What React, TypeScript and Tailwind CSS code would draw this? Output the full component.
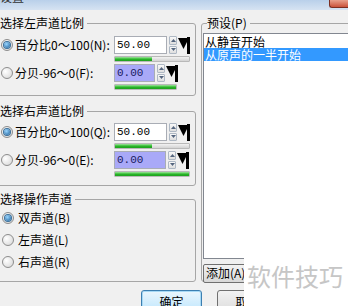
import React from "react";

function Radio({ checked }: { checked?: boolean }) {
  return (
    <div className="w-[12px] h-[12px] rounded-full border border-[#8d8d8d] bg-[radial-gradient(circle_at_35%_35%,#ffffff,#d4d4d4)] flex items-center justify-center shrink-0">
      {checked && (
        <div className="w-[6px] h-[6px] rounded-full bg-[radial-gradient(circle_at_40%_35%,#9ad6ff,#175c98)] shadow-[0_0_0_1px_#3a6f9a]" />
      )}
    </div>
  );
}

function Spin() {
  return (
    <div className="ml-[2px] w-[8px] h-[18px] flex flex-col gap-[1px] shrink-0">
      <div className="flex-1 border border-[#aeb8c4] rounded-[1px] bg-gradient-to-b from-[#f8f8f8] to-[#dedede] flex items-center justify-center">
        <svg width="5" height="3" viewBox="0 0 5 3">
          <polygon points="0,3 5,3 2.5,0" fill="#54657e" />
        </svg>
      </div>
      <div className="flex-1 border border-[#aeb8c4] rounded-[1px] bg-gradient-to-b from-[#f8f8f8] to-[#dedede] flex items-center justify-center">
        <svg width="5" height="3" viewBox="0 0 5 3">
          <polygon points="0,0 5,0 2.5,3" fill="#54657e" />
        </svg>
      </div>
    </div>
  );
}

function Drop() {
  return (
    <svg width="12" height="18" viewBox="0 0 12 18" className="ml-[1px] shrink-0">
      <polygon points="0,2 11,2 5.5,13" fill="#000" />
      <rect x="9" y="1" width="3" height="17" fill="#000" />
    </svg>
  );
}

function Bar({ w, pct }: { w: number; pct: number }) {
  return (
    <div
      className="mt-[2px] h-[6px] rounded-[1px] border border-[#b9b9b9] bg-gradient-to-b from-[#f2f2f2] to-[#d3d3d3] overflow-hidden"
      style={{ width: w }}
    >
      <div
        className="h-full bg-gradient-to-b from-[#9be59b] via-[#28b928] to-[#1e9e1e]"
        style={{ width: `${pct}%` }}
      />
    </div>
  );
}

function SpinRow({
  label,
  checked,
  value,
  inputW,
  barW,
  pct,
  lavender,
  className,
}: {
  label: string;
  checked?: boolean;
  value: string;
  inputW: number;
  barW: number;
  pct: number;
  lavender?: boolean;
  className?: string;
}) {
  return (
    <div className={"flex items-start " + (className ?? "")}>
      <div className="w-[113px] h-[18px] flex items-center shrink-0">
        <Radio checked={checked} />
        <span className="ml-[2px] text-[12px] leading-[14px] whitespace-nowrap">{label}</span>
      </div>
      <div className="flex flex-col">
        <div className="flex items-start">
          <div
            className={
              "h-[18px] border border-[#a9adb5] flex items-center pl-[2px] font-['Liberation_Mono',monospace] text-[11px] shrink-0 " +
              (lavender ? "bg-[#a9a9f8] text-[#1a1a60]" : "bg-white text-black")
            }
            style={{ width: inputW }}
          >
            {value}
          </div>
          <Spin />
          <Drop />
        </div>
        <Bar w={barW} pct={pct} />
      </div>
    </div>
  );
}

function Legend({ children, className }: { children: React.ReactNode; className?: string }) {
  return (
    <legend className={"px-0 pr-[3px] text-[12px] leading-[16px] " + (className ?? "ml-[3px]")}>
      {children}
    </legend>
  );
}

export default function App() {
  return (
    <div className="relative w-[348px] h-[306px] overflow-hidden bg-[#f0f0f0] text-black font-['Noto_Sans_CJK_SC',sans-serif]">
      {/* title bar */}
      <div className="h-[10px] bg-gradient-to-b from-[#b9d0ea] to-[#d6e3f2] overflow-hidden">
        <span className="block mt-[-10px] text-[12px] leading-[14px] text-[#333]">设置</span>
      </div>
      <div className="absolute top-0 right-0 w-[19px] h-[8px] rounded-bl-[3px] border-l border-b border-[#7b2f22] bg-gradient-to-b from-[#e8a08c] to-[#c9513a]" />

      <div className="flex pt-[5px]">
        {/* left column */}
        <div className="ml-[-4px] w-[200px] shrink-0 flex flex-col">
          <fieldset className="m-0 p-0 pl-[4px] border border-[#a6a6a6] rounded-[3px] h-[81px]">
            <Legend className="ml-[-1px]">选择左声道比例</Legend>
            <div className="pt-[5px]">
              <SpinRow label="百分比0～100(N):" checked value="50.00" inputW={53} barW={76} pct={50} />
              <SpinRow className="mt-[2px]" label="分贝-96～0(F):" value="0.00" inputW={41} barW={63} pct={100} lavender />
            </div>
          </fieldset>
          <fieldset className="mt-[7px] m-0 p-0 pl-[4px] border border-[#a6a6a6] rounded-[3px] h-[83px]">
            <Legend className="ml-[-1px]">选择右声道比例</Legend>
            <div className="pt-[4px]">
              <SpinRow label="百分比0～100(Q):" checked value="50.00" inputW={53} barW={76} pct={50} />
              <SpinRow className="mt-[2px]" label="分贝-96～0(E):" value="0.00" inputW={52} barW={76} pct={100} lavender />
            </div>
          </fieldset>
          <fieldset className="mt-[5px] m-0 p-0 pl-[5px] border border-[#a6a6a6] rounded-[3px] h-[91px]">
            <Legend className="ml-[-2px]">选择操作声道</Legend>
            <div className="flex flex-col">
              {[
                ["双声道(B)", true],
                ["左声道(L)", false],
                ["右声道(R)", false],
              ].map(([t, c]) => (
                <div key={t as string} className="h-[22px] flex items-center">
                  <Radio checked={c as boolean} />
                  <span className="ml-[4px] text-[12px] leading-[14px]">{t as string}</span>
                </div>
              ))}
            </div>
          </fieldset>
        </div>

        {/* right column */}
        <div className="ml-[5px] w-[160px] shrink-0">
          <fieldset className="m-0 p-0 border border-[#a6a6a6] rounded-[3px] h-[267px]">
            <Legend className="ml-[5px]">预设(P)</Legend>
            <div className="ml-[1px] mt-[2px] h-[226px] border border-[#828790] bg-white pt-[1px] text-[12px]">
              <div className="pl-[1px] h-[13px] leading-[12px] whitespace-nowrap flex items-center">从静音开始</div>
              <div className="pl-[1px] h-[13px] leading-[12px] whitespace-nowrap flex items-center bg-[#3399ff] text-white">从原声的一半开始</div>
            </div>
            <button className="ml-[1px] mt-[1px] h-[19px] w-[60px] border border-[#707070] rounded-[2px] bg-gradient-to-b from-[#f2f2f2] to-[#d8d8d8] text-[12px] leading-[14px] text-left pl-[2px]">
              添加(A)
            </button>
          </fieldset>
        </div>
      </div>

      {/* bottom buttons */}
      <div className="flex mt-[8px]">
        <button className="ml-[141px] w-[61px] h-[23px] border border-[#3c7fb1] rounded-[3px] bg-gradient-to-b from-[#eaf6fd] to-[#bee6fd] shadow-[inset_0_0_0_1px_#a7d9f5] text-[12px] leading-[14px]">
          确定
        </button>
        <button className="ml-[15px] w-[61px] h-[23px] border border-[#707070] rounded-[3px] bg-gradient-to-b from-[#f2f2f2] to-[#dcdcdc] text-[12px] leading-[14px]">
          取消
        </button>
      </div>

      {/* watermark */}
      <div className="absolute left-[244px] top-[257px] w-[104px] h-[49px] bg-white flex items-start pt-[5px] pl-[3px]">
        <span className="text-[24px] leading-[28px] text-[#c6c6c6] whitespace-nowrap">软件技巧</span>
      </div>
    </div>
  );
}
